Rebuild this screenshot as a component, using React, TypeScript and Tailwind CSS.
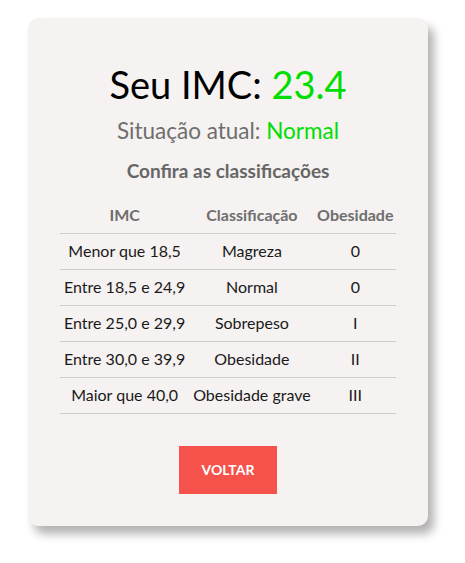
import React from 'react';

const rows = [
  { imc: 'Menor que 18,5', classe: 'Magreza', grau: '0' },
  { imc: 'Entre 18,5 e 24,9', classe: 'Normal', grau: '0' },
  { imc: 'Entre 25,0 e 29,9', classe: 'Sobrepeso', grau: 'I' },
  { imc: 'Entre 30,0 e 39,9', classe: 'Obesidade', grau: 'II' },
  { imc: 'Maior que 40,0', classe: 'Obesidade grave', grau: 'III' },
];

const App: React.FC = () => {
  return (
    <div className="min-h-screen bg-white font-['Lato',sans-serif]">
      <div className="ml-[28px] pt-[18px]">
        <div className="w-[400px] rounded-[10px] bg-[#f5f2f1] px-8 pt-[42px] pb-8 shadow-[6px_8px_10px_rgba(0,0,0,0.3)] text-center">
          <h1 className="text-[38px] leading-[48px] text-black">
            Seu IMC: <span className="text-[#00dd00]">23.4</span>
          </h1>
          <p className="mt-[9px] text-[22.5px] leading-[28px] text-[#6e6e6e]">
            Situação atual: <span className="text-[#00dd00]">Normal</span>
          </p>
          <h2 className="mt-[14px] text-[19px] font-bold leading-[24px] text-[#666]">
            Confira as classificações
          </h2>
          <table className="mt-[14px] w-full border-collapse text-[16px]">
            <thead>
              <tr className="border-b border-[#cfcfcf]">
                <th className="h-[36px] font-bold text-[#6e6e6e]">IMC</th>
                <th className="h-[36px] font-bold text-[#6e6e6e]">Classificação</th>
                <th className="h-[36px] font-bold text-[#6e6e6e]">Obesidade</th>
              </tr>
            </thead>
            <tbody>
              {rows.map((r) => (
                <tr key={r.imc} className="border-b border-[#cfcfcf] text-[#1a1a1a]">
                  <td className="h-[36px]">{r.imc}</td>
                  <td className="h-[36px]">{r.classe}</td>
                  <td className="h-[36px]">{r.grau}</td>
                </tr>
              ))}
            </tbody>
          </table>
          <button className="mt-[32px] h-[48px] w-[98px] bg-[#f5524c] text-[14px] font-bold text-white">
            VOLTAR
          </button>
        </div>
      </div>
    </div>
  );
};

export default App;
